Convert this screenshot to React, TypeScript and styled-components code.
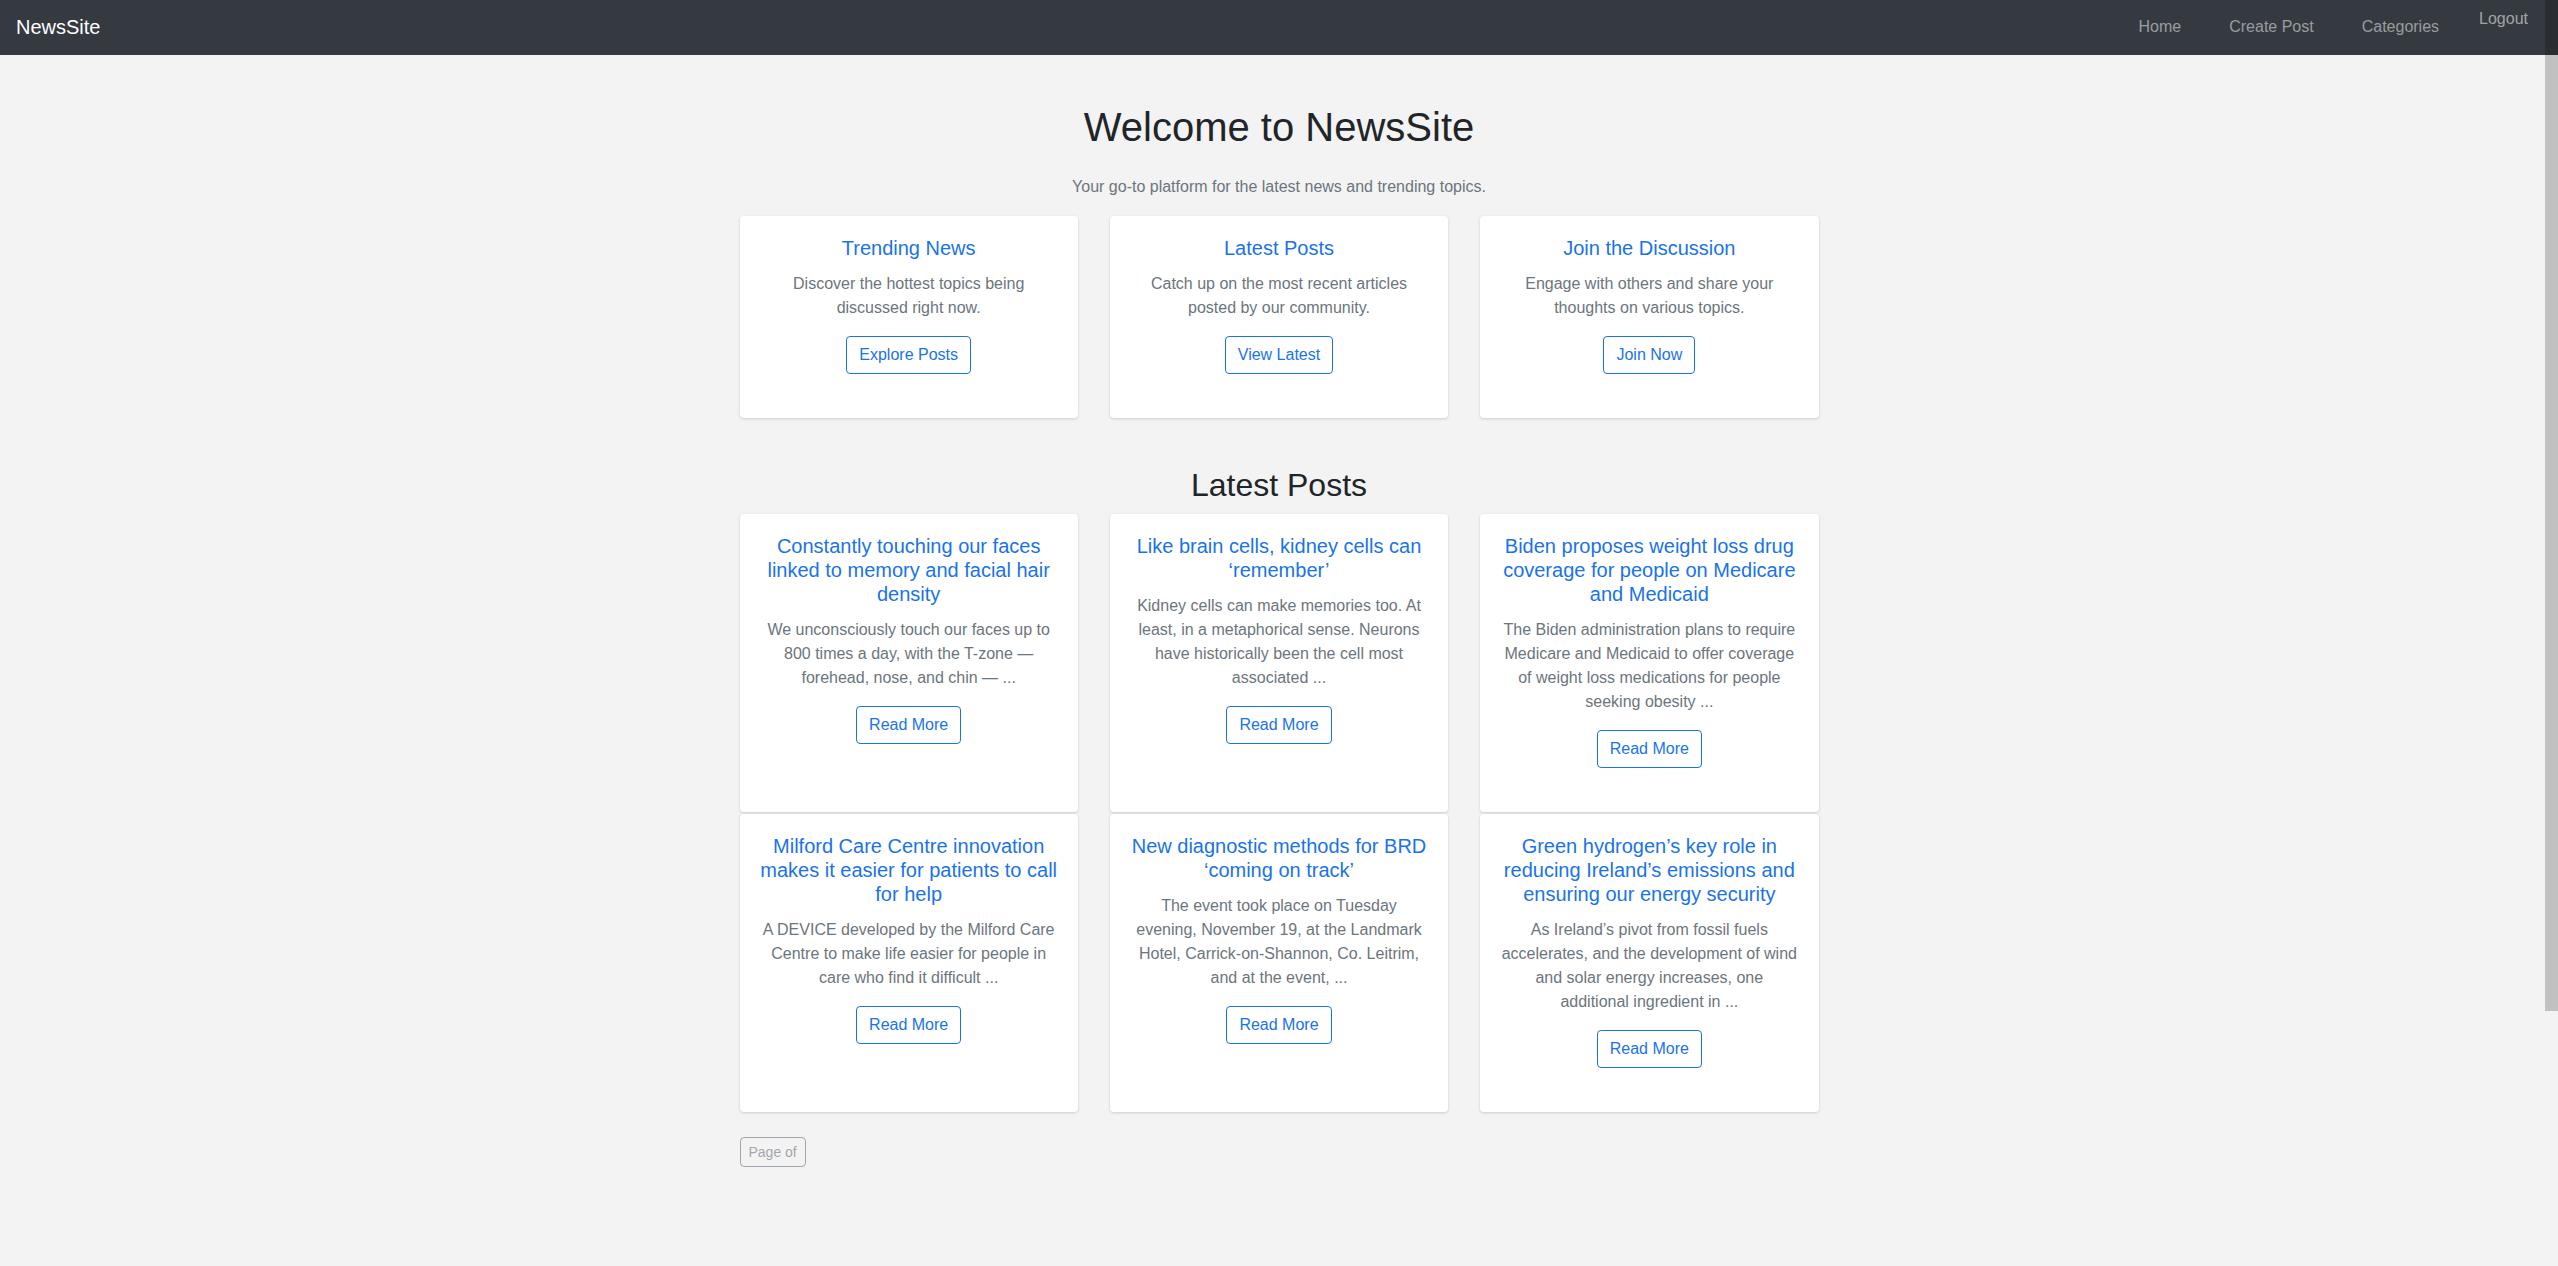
import React from "react";
import styled, { createGlobalStyle } from "styled-components";

const GlobalStyle = createGlobalStyle`
  html, body {
    margin: 0;
    padding: 0;
    background: #f3f3f3;
    font-family: "Liberation Sans", Arial, Helvetica, sans-serif;
    color: #212529;
  }
  * { box-sizing: border-box; }
`;

const NavBar = styled.nav`
  height: 55px;
  background: #343a40;
  display: flex;
  align-items: center;
  justify-content: space-between;
  padding: 0 30px 0 16px;
`;

const Brand = styled.a`
  color: #ffffff;
  font-size: 20px;
  line-height: 30px;
  text-decoration: none;
  margin-top: -1px;
`;

const NavLinks = styled.div`
  display: flex;
  align-items: center;
  height: 100%;
`;

const NavLink = styled.a`
  color: rgba(255, 255, 255, 0.5);
  font-size: 16px;
  line-height: 24px;
  padding: 0 24px;
  margin-top: -2px;
  text-decoration: none;
`;

const LogoutButton = styled.button`
  align-self: flex-start;
  margin-top: 9px;
  padding: 0 0 0 16px;
  background: none;
  border: none;
  color: rgba(255, 255, 255, 0.55);
  font-family: inherit;
  font-size: 16px;
  line-height: 20px;
`;

const Main = styled.main`
  width: 1079px;
  margin: 0 auto;
  padding-bottom: 60px;
`;

const Hero = styled.header`
  text-align: center;
  padding-top: 48px;
`;

const HeroTitle = styled.h1`
  margin: 0 0 24px;
  font-size: 40px;
  line-height: 48px;
  font-weight: 400;
  color: #212529;
`;

const HeroLead = styled.p`
  margin: 0 0 17px;
  font-size: 16px;
  line-height: 24px;
  color: #6c757d;
`;

const CardGrid = styled.div<{ $rowGap: number }>`
  display: grid;
  grid-template-columns: repeat(3, 1fr);
  column-gap: 32px;
  row-gap: ${(p) => p.$rowGap}px;
  align-items: stretch;
`;

const Card = styled.article`
  background: #ffffff;
  border-radius: 4px;
  box-shadow: 0 1px 3px rgba(0, 0, 0, 0.16);
  padding: 20px 20px 44px;
  text-align: center;
`;

const CardTitle = styled.h5`
  margin: 0 0 12px;
  font-size: 20px;
  line-height: 24px;
  font-weight: 400;
  color: #1a73e8;
`;

const CardText = styled.p`
  margin: 0 0 16px;
  font-size: 16px;
  line-height: 24px;
  color: #6c757d;
`;

const OutlineButton = styled.a`
  display: inline-block;
  padding: 6px 12px;
  font-size: 16px;
  line-height: 24px;
  color: #1a73e8;
  border: 1px solid #1a73e8;
  border-radius: 4px;
  text-decoration: none;
  background: transparent;
`;

const SectionTitle = styled.h2`
  margin: 48px 0 10px;
  font-size: 32px;
  line-height: 38px;
  font-weight: 400;
  text-align: center;
  color: #212529;
`;

const Pagination = styled.div`
  margin-top: 25px;
  display: flex;
`;

const PageButton = styled.button`
  padding: 4px 8px;
  font-family: inherit;
  font-size: 14px;
  line-height: 20px;
  color: #6c757d;
  background: transparent;
  border: 1px solid #6c757d;
  border-radius: 4px;
  opacity: 0.6;
`;

const ScrollStrip = styled.div`
  position: fixed;
  top: 0;
  right: 0;
  width: 13px;
  height: 100vh;
  display: flex;
  flex-direction: column;
  pointer-events: none;
`;

const ScrollCap = styled.div`
  height: 55px;
  background: #2a2e33;
`;

const ScrollThumb = styled.div`
  height: 956px;
  background: #c1c1c1;
`;

const features = [
  {
    title: "Trending News",
    text: "Discover the hottest topics being discussed right now.",
    action: "Explore Posts",
  },
  {
    title: "Latest Posts",
    text: "Catch up on the most recent articles posted by our community.",
    action: "View Latest",
  },
  {
    title: "Join the Discussion",
    text: "Engage with others and share your thoughts on various topics.",
    action: "Join Now",
  },
];

const posts = [
  {
    title: "Constantly touching our faces linked to memory and facial hair density",
    text: "We unconsciously touch our faces up to 800 times a day, with the T-zone — forehead, nose, and chin — ...",
  },
  {
    title: "Like brain cells, kidney cells can ‘remember’",
    text: "Kidney cells can make memories too. At least, in a metaphorical sense. Neurons have historically been the cell most associated ...",
  },
  {
    title: "Biden proposes weight loss drug coverage for people on Medicare and Medicaid",
    text: "The Biden administration plans to require Medicare and Medicaid to offer coverage of weight loss medications for people seeking obesity ...",
  },
  {
    title: "Milford Care Centre innovation makes it easier for patients to call for help",
    text: "A DEVICE developed by the Milford Care Centre to make life easier for people in care who find it difficult ...",
  },
  {
    title: "New diagnostic methods for BRD ‘coming on track’",
    text: "The event took place on Tuesday evening, November 19, at the Landmark Hotel, Carrick-on-Shannon, Co. Leitrim, and at the event, ...",
  },
  {
    title: "Green hydrogen’s key role in reducing Ireland’s emissions and ensuring our energy security",
    text: "As Ireland’s pivot from fossil fuels accelerates, and the development of wind and solar energy increases, one additional ingredient in ...",
  },
];

export default function App() {
  return (
    <>
      <GlobalStyle />
      <NavBar>
        <Brand href="#">NewsSite</Brand>
        <NavLinks>
          <NavLink href="#">Home</NavLink>
          <NavLink href="#">Create Post</NavLink>
          <NavLink href="#">Categories</NavLink>
          <LogoutButton type="button">Logout</LogoutButton>
        </NavLinks>
      </NavBar>
      <Main>
        <Hero>
          <HeroTitle>Welcome to NewsSite</HeroTitle>
          <HeroLead>Your go-to platform for the latest news and trending topics.</HeroLead>
        </Hero>
        <CardGrid $rowGap={32}>
          {features.map((f) => (
            <Card key={f.title}>
              <CardTitle>{f.title}</CardTitle>
              <CardText>{f.text}</CardText>
              <OutlineButton href="#">{f.action}</OutlineButton>
            </Card>
          ))}
        </CardGrid>
        <SectionTitle>Latest Posts</SectionTitle>
        <CardGrid $rowGap={2}>
          {posts.map((p) => (
            <Card key={p.title}>
              <CardTitle>{p.title}</CardTitle>
              <CardText>{p.text}</CardText>
              <OutlineButton href="#">Read More</OutlineButton>
            </Card>
          ))}
        </CardGrid>
        <Pagination>
          <PageButton type="button" disabled>
            Page of
          </PageButton>
        </Pagination>
      </Main>
      <ScrollStrip>
        <ScrollCap />
        <ScrollThumb />
      </ScrollStrip>
    </>
  );
}
